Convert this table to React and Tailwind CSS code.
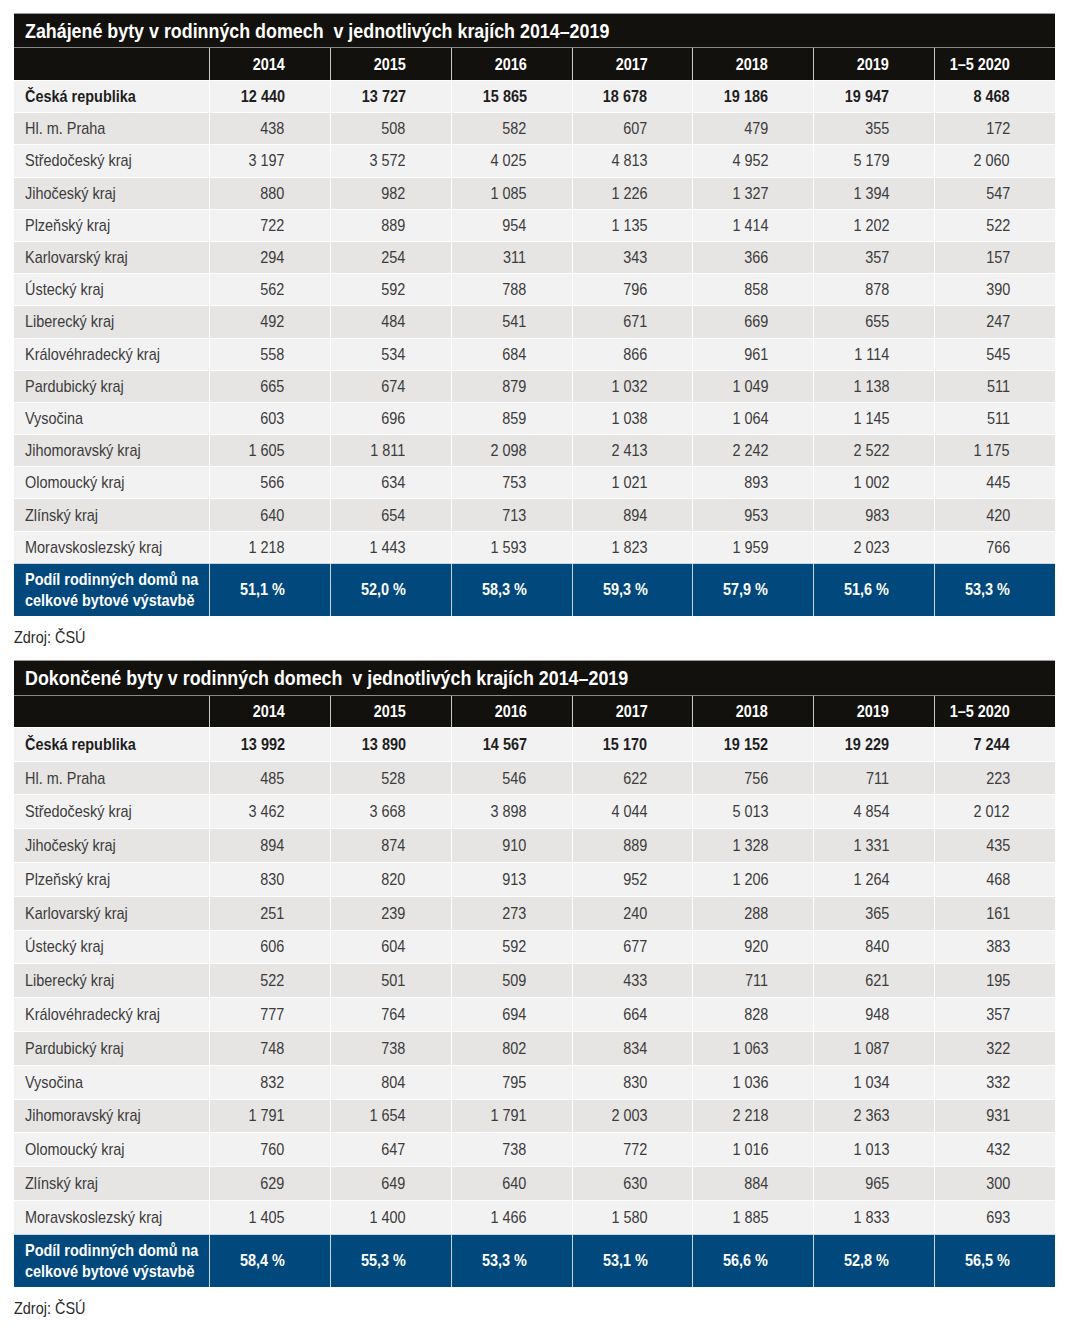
const YEARS = ['2014', '2015', '2016', '2017', '2018', '2019', '1–5 2020']

const REGIONS = [
  'Hl. m. Praha',
  'Středočeský kraj',
  'Jihočeský kraj',
  'Plzeňský kraj',
  'Karlovarský kraj',
  'Ústecký kraj',
  'Liberecký kraj',
  'Královéhradecký kraj',
  'Pardubický kraj',
  'Vysočina',
  'Jihomoravský kraj',
  'Olomoucký kraj',
  'Zlínský kraj',
  'Moravskoslezský kraj',
]

const started = {
  title: 'Zahájené byty v rodinných domech  v jednotlivých krajích 2014–2019',
  total: ['12 440', '13 727', '15 865', '18 678', '19 186', '19 947', '8 468'],
  rows: [
    ['438', '508', '582', '607', '479', '355', '172'],
    ['3 197', '3 572', '4 025', '4 813', '4 952', '5 179', '2 060'],
    ['880', '982', '1 085', '1 226', '1 327', '1 394', '547'],
    ['722', '889', '954', '1 135', '1 414', '1 202', '522'],
    ['294', '254', '311', '343', '366', '357', '157'],
    ['562', '592', '788', '796', '858', '878', '390'],
    ['492', '484', '541', '671', '669', '655', '247'],
    ['558', '534', '684', '866', '961', '1 114', '545'],
    ['665', '674', '879', '1 032', '1 049', '1 138', '511'],
    ['603', '696', '859', '1 038', '1 064', '1 145', '511'],
    ['1 605', '1 811', '2 098', '2 413', '2 242', '2 522', '1 175'],
    ['566', '634', '753', '1 021', '893', '1 002', '445'],
    ['640', '654', '713', '894', '953', '983', '420'],
    ['1 218', '1 443', '1 593', '1 823', '1 959', '2 023', '766'],
  ],
  share: ['51,1 %', '52,0 %', '58,3 %', '59,3 %', '57,9 %', '51,6 %', '53,3 %'],
}

const finished = {
  title: 'Dokončené byty v rodinných domech  v jednotlivých krajích 2014–2019',
  total: ['13 992', '13 890', '14 567', '15 170', '19 152', '19 229', '7 244'],
  rows: [
    ['485', '528', '546', '622', '756', '711', '223'],
    ['3 462', '3 668', '3 898', '4 044', '5 013', '4 854', '2 012'],
    ['894', '874', '910', '889', '1 328', '1 331', '435'],
    ['830', '820', '913', '952', '1 206', '1 264', '468'],
    ['251', '239', '273', '240', '288', '365', '161'],
    ['606', '604', '592', '677', '920', '840', '383'],
    ['522', '501', '509', '433', '711', '621', '195'],
    ['777', '764', '694', '664', '828', '948', '357'],
    ['748', '738', '802', '834', '1 063', '1 087', '322'],
    ['832', '804', '795', '830', '1 036', '1 034', '332'],
    ['1 791', '1 654', '1 791', '2 003', '2 218', '2 363', '931'],
    ['760', '647', '738', '772', '1 016', '1 013', '432'],
    ['629', '649', '640', '630', '884', '965', '300'],
    ['1 405', '1 400', '1 466', '1 580', '1 885', '1 833', '693'],
  ],
  share: ['58,4 %', '55,3 %', '53,3 %', '53,1 %', '56,6 %', '52,8 %', '56,5 %'],
}

// narrow text: Liberation Sans squeezed to mimic a condensed face
function L({ children }) {
  return <span className="inline-block whitespace-pre scale-x-[0.85] origin-left">{children}</span>
}

function R({ children }) {
  return <span className="inline-block whitespace-pre scale-x-[0.85] origin-right">{children}</span>
}

function Row({ label, values, bold, dark, rowH }) {
  return (
    <div
      className={`flex border-t border-white ${rowH} ${dark ? 'bg-[#e6e5e3]' : 'bg-[#f3f2f2]'} ${
        bold ? 'font-bold text-[#1e1e1e]' : 'text-[#3c3c3c]'
      }`}
    >
      <div className="w-[195px] shrink-0 pl-[11px] flex items-center">
        <L>{label}</L>
      </div>
      {values.map((v, i) => (
        <div key={i} className="flex-1 border-l border-white flex items-center justify-end pr-[45px]">
          <R>{v}</R>
        </div>
      ))}
    </div>
  )
}

function DataTable({ data, titleH, headH, rowH }) {
  return (
    <div className="w-[1041px] ml-[14px] text-[17px] leading-none">
      <div className={`${titleH} bg-[#12110d] border-t border-[#9a9a9a] flex items-center pl-[11px] text-white font-bold text-[21px]`}>
        <L>{data.title}</L>
      </div>
      <div className={`${headH} bg-[#12110d] border-t border-[#8a8a8a] flex text-white font-bold`}>
        <div className="w-[195px] shrink-0" />
        {YEARS.map((y) => (
          <div key={y} className="flex-1 border-l border-[#c8c8c8] flex items-center justify-end pr-[45px]">
            <R>{y}</R>
          </div>
        ))}
      </div>
      <Row label="Česká republika" values={data.total} bold rowH={rowH} />
      {REGIONS.map((r, i) => (
        <Row key={r} label={r} values={data.rows[i]} dark={i % 2 === 0} rowH={rowH} />
      ))}
      <div className="h-[53px] flex bg-[#01497d] border-t border-[#c8d4e0] text-white font-bold">
        <div className="w-[195px] shrink-0 pl-[11px] flex flex-col justify-center leading-[21px]">
          <L>Podíl rodinných domů na</L>
          <L>celkové bytové výstavbě</L>
        </div>
        {data.share.map((v, i) => (
          <div key={i} className="flex-1 border-l border-[#c8d4e0] flex items-center justify-end pr-[45px]">
            <R>{v}</R>
          </div>
        ))}
      </div>
      <div className="h-[20px] mt-[12px] flex items-center text-[17px] text-[#2a2a2a]">
        <L>Zdroj: ČSÚ</L>
      </div>
    </div>
  )
}

export default function App() {
  return (
    <div
      className="w-[1084px] h-[1332px] bg-white pt-[13px] overflow-hidden"
      style={{ fontFamily: '"Liberation Sans", Arial, sans-serif' }}
    >
      <DataTable data={started} titleH="h-[34px]" headH="h-[33px]" rowH="h-[32.2px]" />
      <div className="h-[12px]" />
      <DataTable data={finished} titleH="h-[35px]" headH="h-[32px]" rowH="h-[33.8px]" />
    </div>
  )
}
